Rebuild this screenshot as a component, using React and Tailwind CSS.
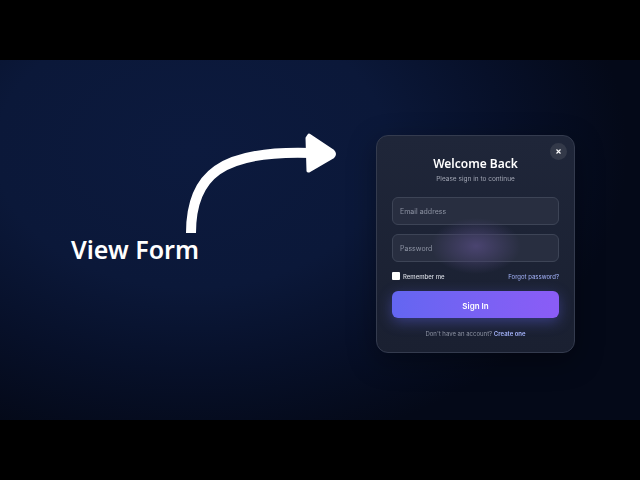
import React from "react";

const App = () => {
  return (
    <div className="w-[640px] h-[480px] bg-black flex flex-col justify-center overflow-hidden font-['Inter',sans-serif]">
      <div className="h-[360px] flex bg-[radial-gradient(ellipse_68%_85%_at_30%_25%,#0c1a3e_0%,#0b1839_45%,#071029_72%,#040918_100%)]">
        {/* Left side, arrow and label */}
        <div className="w-[376px] pl-[71px] pt-[70px] flex flex-col">
          <svg width="280" height="104" viewBox="0 0 280 104" className="block">
            <path
              d="M120 103 C120 45 150 20 240 23"
              fill="none"
              stroke="#fff"
              strokeWidth="10"
            />
            <path
              d="M238 5 L262 21 Q265 24 262 27 L238 41 L237 41 L236 8 Z"
              fill="#fff"
              stroke="#fff"
              strokeWidth="3"
              strokeLinejoin="round"
            />
          </svg>
          <span className="text-[25px] leading-[30px] font-semibold text-white font-['Noto_Sans',sans-serif]">
            View Form
          </span>
        </div>

        {/* Login card */}
        <div className="relative mt-[75px] w-[199px] h-[218px] rounded-[12px] border border-[#343b4e] bg-gradient-to-b from-[#1f2639] to-[#1a2031] backdrop-blur-md px-[15px] pt-[20px] shadow-[0_8px_28px_rgba(0,0,0,0.35)]">
          <button className="absolute top-[7px] right-[7px] w-[17px] h-[17px] rounded-full bg-[#333949] flex items-center justify-center text-white">
            <svg width="7" height="7" viewBox="0 0 7 7">
              <path d="M1.5 1.5 L5.5 5.5 M5.5 1.5 L1.5 5.5" stroke="#fff" strokeWidth="1.1" />
            </svg>
          </button>
          <h2 className="text-center text-[12px] leading-[16px] font-semibold text-white font-['Noto_Sans',sans-serif]">
            Welcome Back
          </h2>
          <p className="mt-[1px] text-center text-[6.5px] leading-[12px] text-[#a0a5b3]">
            Please sign in to continue
          </p>
          <div className="mt-[12px] h-[28px] rounded-[6px] border border-[#3d4456] bg-[#282e40] flex items-center pl-[7px] pt-[2px] text-[7px] text-[#8d93a3]">
            Email address
          </div>
          <div className="relative mt-[9px] h-[28px] rounded-[6px] border border-[#3d4456] bg-[#282e40] flex items-center pl-[7px] pt-[2px] text-[7px] text-[#8d93a3]">
            <div className="absolute left-[38px] top-[-17px] w-[90px] h-[56px] bg-[radial-gradient(closest-side,#4a4470_0%,rgba(74,68,112,0)_100%)]"></div>
            <span className="relative">Password</span>
          </div>
          <div className="mt-[9px] flex items-center justify-between h-[10px]">
            <label className="flex items-center gap-[3px] text-[6px] font-medium text-[#d5d8e0]">
              <span className="w-[8px] h-[8px] bg-white rounded-[1px]"></span>
              Remember me
            </label>
            <a className="text-[6px] text-[#a5b4fc]">Forgot password?</a>
          </div>
          <button className="mt-[10px] w-full h-[27px] pt-[2px] rounded-[6px] bg-gradient-to-r from-[#6366f1] to-[#8b5cf6] text-white text-[8px] font-semibold shadow-[0_4px_14px_rgba(99,102,241,0.4)]">
            Sign In
          </button>
          <p className="mt-[11px] text-center text-[6px] text-[#8d93a3]">
            Don't have an account? <span className="font-semibold text-[#a5b4fc]">Create one</span>
          </p>
        </div>
      </div>
    </div>
  );
};

export default App;
